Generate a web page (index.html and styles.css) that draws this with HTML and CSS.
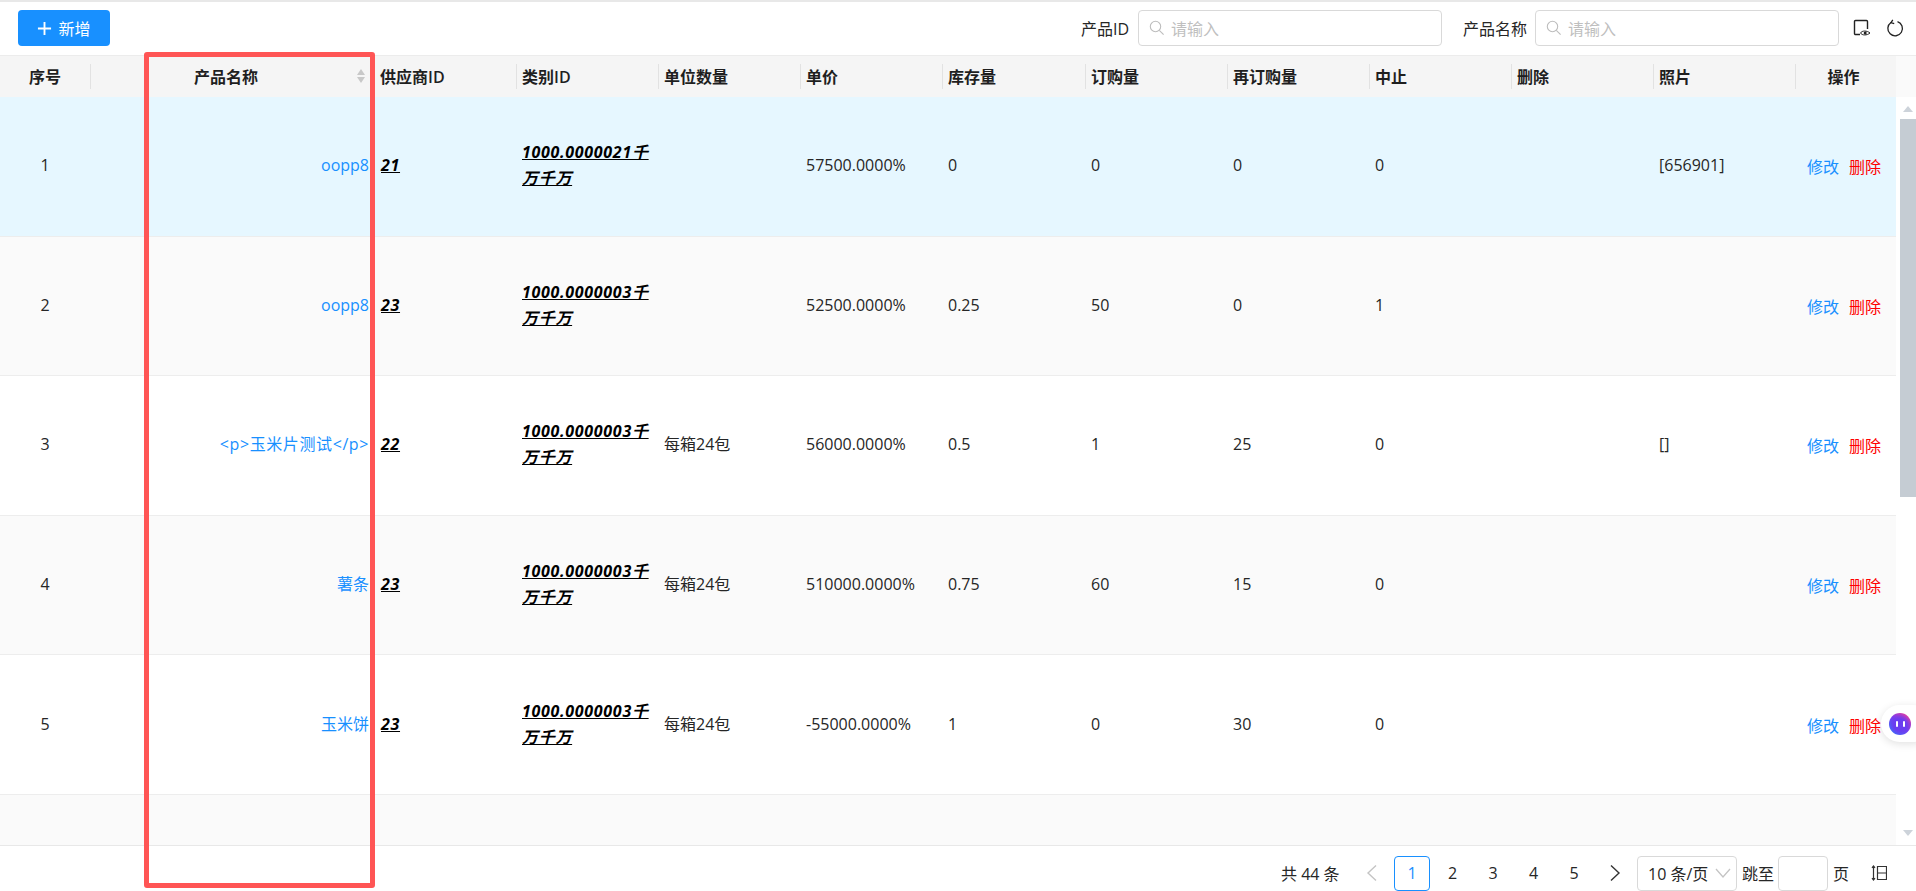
FILE: index.html
```html
<!DOCTYPE html>
<html lang="zh-CN">
<head>
<meta charset="utf-8">
<title>产品列表</title>
<link rel="stylesheet" href="styles.css">
</head>
<body>
<div class="page">
  <div class="toolbar">
    <button class="add-btn">
      <svg class="plus" viewBox="0 0 16 16"><path d="M8 1v14M1 8h14" stroke="currentColor" stroke-width="2" fill="none"/></svg>
      <span>新增</span>
    </button>
    <div class="filters">
      <label class="flabel">产品ID</label>
      <div class="finput">
        <svg class="search" viewBox="0 0 16 16"><circle cx="6.5" cy="6.5" r="5.2" stroke="#bdbdbd" stroke-width="1.1" fill="none"/><path d="M10.3 10.3 14.6 14.6" stroke="#bdbdbd" stroke-width="1.1"/></svg>
        <span>请输入</span>
      </div>
      <label class="flabel second">产品名称</label>
      <div class="finput">
        <svg class="search" viewBox="0 0 16 16"><circle cx="6.5" cy="6.5" r="5.2" stroke="#bdbdbd" stroke-width="1.1" fill="none"/><path d="M10.3 10.3 14.6 14.6" stroke="#bdbdbd" stroke-width="1.1"/></svg>
        <span>请输入</span>
      </div>
      <svg class="tool eye" viewBox="0 0 18 18"><path d="M7 15.5H2.5a1 1 0 0 1-1-1V2.5a1 1 0 0 1 1-1h11a1 1 0 0 1 1 1V10" stroke="#222" stroke-width="1.4" fill="none"/><path d="M7.500 14c1.500-2.600 6.500-2.600 9.500 0-3 2.600-8 2.600-9.500 0z" stroke="#222" stroke-width="1" fill="#fff"/><circle cx="12.200" cy="14" r="1.500" fill="#222"/></svg>
      <svg class="tool reload" viewBox="0 0 18 18"><path d="M11.500 2.600A7.300 7.300 0 1 1 5 3.500" stroke="#222" stroke-width="1.300" fill="none"/><path d="M6.800 .8 5 3.700l3.200 1" stroke="#222" stroke-width="1.300" fill="none"/></svg>
    </div>
  </div>

  <div class="thead-row">
    <div class="grid thead">
      <div class="th center"><span>序号</span></div>
      <div class="th sep name-th"><span class="name-title">产品名称</span>
        <svg class="sorter" viewBox="0 0 10 16"><path d="M5 1 9 7H1zM5 15 1 9h8z" fill="#c8c8c8"/></svg>
      </div>
      <div class="th first-plain"><span>供应商ID</span></div>
      <div class="th sep"><span>类别ID</span></div>
      <div class="th sep"><span>单位数量</span></div>
      <div class="th sep"><span>单价</span></div>
      <div class="th sep"><span>库存量</span></div>
      <div class="th sep"><span>订购量</span></div>
      <div class="th sep"><span>再订购量</span></div>
      <div class="th sep"><span>中止</span></div>
      <div class="th sep"><span>删除</span></div>
      <div class="th sep"><span>照片</span></div>
      <div class="th sep center action-th"><span>操作</span></div>
    </div>
    <div class="thead-fill"></div>
  </div>

  <div class="tbody-row">
    <div class="tbody">
      <div class="grid tr current">
        <div class="td center">1</div><div class="td link right">oopp8</div><div class="td strong">21</div>
        <div class="td strong">1000.0000021千万千万</div><div class="td"></div><div class="td">57500.0000%</div>
        <div class="td">0</div><div class="td">0</div><div class="td">0</div><div class="td">0</div><div class="td"></div>
        <div class="td">[656901]</div><div class="td ops"><a class="edit">修改</a><a class="del">删除</a></div>
      </div>
      <div class="grid tr stripe">
        <div class="td center">2</div><div class="td link right">oopp8</div><div class="td strong">23</div>
        <div class="td strong">1000.0000003千万千万</div><div class="td"></div><div class="td">52500.0000%</div>
        <div class="td">0.25</div><div class="td">50</div><div class="td">0</div><div class="td">1</div><div class="td"></div>
        <div class="td"></div><div class="td ops"><a class="edit">修改</a><a class="del">删除</a></div>
      </div>
      <div class="grid tr">
        <div class="td center">3</div><div class="td link right wide">&lt;p&gt;玉米片测试&lt;/p&gt;</div><div class="td strong">22</div>
        <div class="td strong">1000.0000003千万千万</div><div class="td">每箱24包</div><div class="td">56000.0000%</div>
        <div class="td">0.5</div><div class="td">1</div><div class="td">25</div><div class="td">0</div><div class="td"></div>
        <div class="td">[]</div><div class="td ops"><a class="edit">修改</a><a class="del">删除</a></div>
      </div>
      <div class="grid tr stripe">
        <div class="td center">4</div><div class="td link right">薯条</div><div class="td strong">23</div>
        <div class="td strong">1000.0000003千万千万</div><div class="td">每箱24包</div><div class="td">510000.0000%</div>
        <div class="td">0.75</div><div class="td">60</div><div class="td">15</div><div class="td">0</div><div class="td"></div>
        <div class="td"></div><div class="td ops"><a class="edit">修改</a><a class="del">删除</a></div>
      </div>
      <div class="grid tr">
        <div class="td center">5</div><div class="td link right">玉米饼</div><div class="td strong">23</div>
        <div class="td strong">1000.0000003千万千万</div><div class="td">每箱24包</div><div class="td">-55000.0000%</div>
        <div class="td">1</div><div class="td">0</div><div class="td">30</div><div class="td">0</div><div class="td"></div>
        <div class="td"></div><div class="td ops"><a class="edit">修改</a><a class="del">删除</a></div>
      </div>
      <div class="tr-rest"></div>
    </div>
    <div class="scrollbar">
      <i class="arrow up"></i>
      <i class="thumb"></i>
      <i class="arrow down"></i>
    </div>
  </div>

  <div class="pager">
    <span class="total">共 44 条</span>
    <svg class="chev prev" viewBox="0 0 12 18"><path d="M10 1.500 2 9l8 7.500" stroke="#c4c4c4" stroke-width="1.400" fill="none"/></svg>
    <span class="pg active">1</span>
    <span class="pg">2</span>
    <span class="pg">3</span>
    <span class="pg">4</span>
    <span class="pg">5</span>
    <svg class="chev next" viewBox="0 0 12 18"><path d="M2 1.500 10 9l-8 7.500" stroke="#333" stroke-width="1.400" fill="none"/></svg>
    <div class="size-select"><span>10 条/页</span>
      <svg class="drop" viewBox="0 0 16 10"><path d="M1 1l7 8 7-8" stroke="#c4c4c4" stroke-width="1.300" fill="none"/></svg>
    </div>
    <span class="jump">跳至</span>
    <div class="jump-input"></div>
    <span class="jump-unit">页</span>
    <svg class="density" viewBox="0 0 16 16"><path d="M2.500 1v14M1 2.800 2.500 1 4 2.800M1 13.200 2.500 15 4 13.200" stroke="#333" stroke-width="1.200" fill="none"/><path d="M6.500 1.500h9v13h-9zM6.500 8h9" stroke="#333" stroke-width="1.200" fill="none"/></svg>
  </div>

  <div class="highlight-box"></div>
  <div class="assistant"><span class="orb"><i></i><i></i></span></div>
</div>
</body>
</html>
```
FILE: styles.css
```css
* { box-sizing: border-box; }
html, body { margin: 0; height: 100%; }
body {
  font-family: "Open Sans", "Noto Sans CJK SC", sans-serif;
  font-size: 16px;
  color: #262626;
  background: #fff;
  overflow: hidden;
}
.page {
  position: relative;
  width: 1916px;
  height: 891px;
  display: flex;
  flex-direction: column;
  border-top: 2px solid #e8e8e8;
  overflow: hidden;
}
.toolbar {
  height: 53px;
  flex: none;
  display: flex;
  align-items: flex-start;
  justify-content: space-between;
  padding: 8px 0 0 18px;
}
.add-btn {
  width: 92px;
  height: 36px;
  border: 0;
  border-radius: 4px;
  background: #1890ff;
  color: #fff;
  font: inherit;
  display: flex;
  align-items: center;
  justify-content: center;
  gap: 6px;
  padding: 0;
}
.plus { width: 15px; height: 15px; }
.filters { display: flex; align-items: center; height: 36px; }
.flabel { width: 48px; margin-right: 9px; white-space: nowrap; }
.flabel.second { width: 64px; margin-left: 21px; margin-right: 8px; }
.finput {
  width: 304px;
  height: 36px;
  border: 1px solid #d9d9d9;
  border-radius: 4px;
  display: flex;
  align-items: center;
  gap: 6px;
  padding-left: 10px;
  color: #bfbfbf;
}
.search { width: 16px; height: 16px; }
.tool { width: 18px; height: 18px; }
.tool.eye { margin-left: 14px; }
.tool.reload { margin-left: 15px; margin-right: 12px; }

.grid {
  display: grid;
  grid-template-columns: 90px 285px 141px 142px 142px 142px 143px 142px 142px 142px 142px 142px 101px;
}
.thead-row { display: flex; height: 42px; flex: none; border-top: 1px solid #ececec; }
.thead { width: 1896px; background: #f5f5f5; }
.thead-fill { flex: 1; background: #fafafa; }
.th {
  display: flex;
  align-items: center;
  font-weight: 600;
  padding-left: 5px;
  color: #1f1f1f;
}
.th.sep > span:first-child { height: 25px; display: flex; align-items: center; padding-bottom: 2px; }
.th.first-plain > span, .th.center > span { padding-bottom: 2px; }
.th.sep { padding-left: 0; }
.th.sep > span:first-child { border-left: 1px solid #e2e2e2; padding-left: 5px; flex: 1; }
.th.center { justify-content: center; padding-left: 0; }
.th.sep.center > span:first-child { justify-content: center; }
.th.sep.action-th > span:first-child { padding-left: 0; padding-right: 5px; }
.name-th { position: relative; }
.th.sep.name-th > span:first-child { justify-content: center; padding-right: 19px; }
.sorter { position: absolute; right: 9px; top: 12px; width: 10px; height: 16px; }

.tbody-row { flex: 1; display: flex; min-height: 0; }
.tbody { width: 1896px; display: flex; flex-direction: column; overflow: hidden; }
.tr { height: 139.6px; flex: none; border-bottom: 1px solid #ededed; }
.tr.current { background: #e6f7ff; }
.tr.stripe { background: #fafafa; }
.tr-rest { flex: 1; background: #fafafa; }
.td {
  display: flex;
  align-items: center;
  padding: 0 6px 2px;
  line-height: 26px;
  min-width: 0;
}
.td.center { justify-content: center; }
.td.right { justify-content: flex-end; }
.td.link { color: #1890ff; }
.td.wide { letter-spacing: .6px; }
.td.strong {
  font-weight: 700;
  font-style: italic;
  text-decoration: underline;
  letter-spacing: .7px;
  color: #000;
  display: block;
  align-self: center;
}
.td.ops { padding: 2px 0 0 12px; gap: 10px; }
.edit { color: #1890ff; }
.del { color: #f00; }

.scrollbar {
  flex: 1;
  display: flex;
  flex-direction: column;
  align-items: flex-end;
  background: #fff;
}
.arrow { width: 0; height: 0; border-left: 5px solid transparent; border-right: 5px solid transparent; margin-right: 3px; }
.arrow.up { border-bottom: 6px solid #cdd3da; margin-top: 9px; }
.arrow.down { border-top: 6px solid #cdd3da; margin-top: auto; margin-bottom: 9px; }
.thumb { width: 16px; height: 378px; margin-top: 7px; background: #c5ccd3; }

.pager {
  height: 46px;
  flex: none;
  border-top: 1px solid #e8e8e8;
  display: flex;
  align-items: center;
  padding-left: 1281px;
  padding-top: 9px;
}
.total { width: 60px; white-space: nowrap; }
.chev { width: 12px; height: 18px; }
.chev.prev { margin-left: 25px; margin-right: 16px; }
.chev.next { margin-left: 17px; margin-right: 16px; }
.pg {
  width: 36px;
  height: 35px;
  margin-right: 4.500px;
  display: flex;
  align-items: center;
  justify-content: center;
  border-radius: 4px;
}
.pg:nth-of-type(6) { margin-right: 0; }
.pg.active { border: 1px solid #1890ff; color: #1890ff; }
.size-select {
  width: 100px;
  height: 35px;
  border: 1px solid #d9d9d9;
  border-radius: 4px;
  display: flex;
  align-items: center;
  justify-content: space-between;
  padding: 0 5px 0 10px;
  white-space: nowrap;
}
.drop { width: 16px; height: 10px; }
.jump { margin-left: 5px; width: 32px; white-space: nowrap; }
.jump-input { width: 50px; height: 35px; margin-left: 4px; border: 1px solid #d9d9d9; border-radius: 4px; }
.jump-unit { margin-left: 5px; width: 16px; }
.density { width: 16px; height: 16px; margin-left: 22px; }

.highlight-box {
  position: absolute;
  left: 144px;
  top: 50px;
  width: 231px;
  height: 836px;
  border: 5px solid #ff5555;
  border-radius: 3px;
  pointer-events: none;
}
.assistant {
  position: absolute;
  left: 1881px;
  top: 703px;
  width: 50px;
  height: 37px;
  border-radius: 19px;
  background: #fff;
  box-shadow: 0 2px 8px rgba(0, 0, 0, .12);
  display: flex;
  align-items: center;
  padding-left: 8px;
}
.orb {
  width: 22px;
  height: 22px;
  border-radius: 50%;
  background: radial-gradient(circle at 50% 55%, #6a3cf0 0 35%, transparent 70%), linear-gradient(40deg, #1f8bff 0%, #7a3cf0 50%, #ff3f8b 100%);
  display: flex;
  align-items: center;
  justify-content: center;
  gap: 5px;
  filter: blur(.6px);
}
.orb i { width: 2px; height: 6px; background: #fff; border-radius: 1px; }
```
